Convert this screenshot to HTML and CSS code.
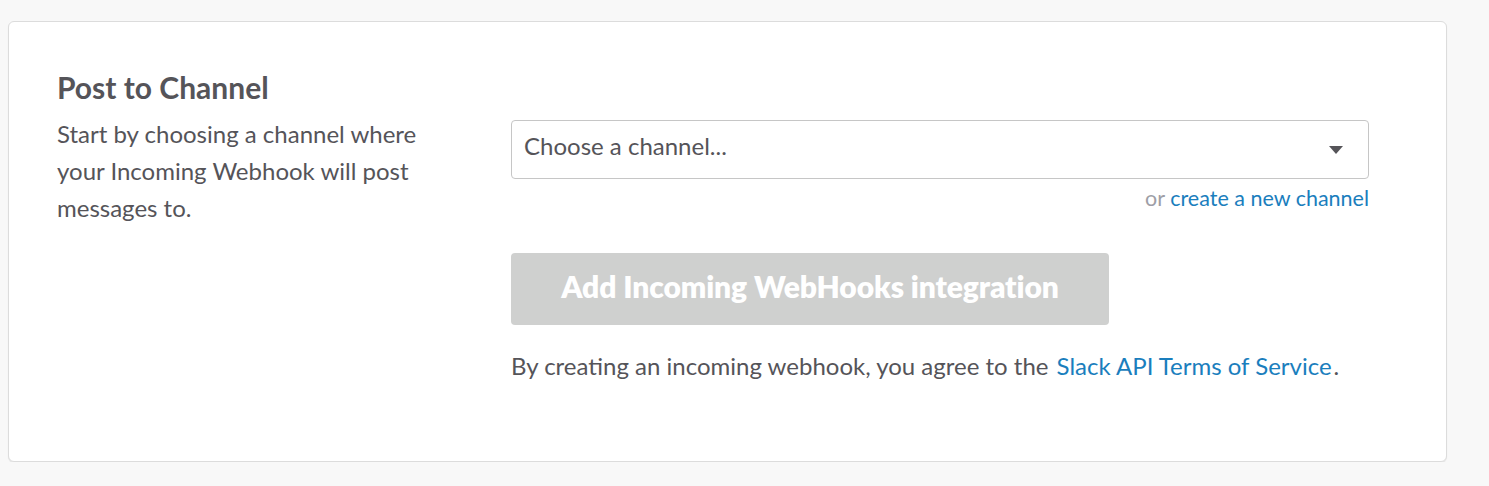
FILE: index.html
```html
<!DOCTYPE html>
<html>
<head>
<meta charset="utf-8">
<link rel="stylesheet" href="styles.css">
</head>
<body>
<div class="card">
  <div class="left">
    <h2 class="title">Post to Channel</h2>
    <p class="desc">Start by choosing a channel where your Incoming Webhook will post messages to.</p>
  </div>
  <div class="right">
    <div class="select">
      <span class="placeholder">Choose a channel...</span>
      <span class="caret"></span>
    </div>
    <div class="create">or <a class="link" href="#">create a new channel</a></div>
    <button class="btn">Add Incoming WebHooks integration</button>
    <p class="terms">By creating an incoming webhook, you agree to the <a class="link tos" href="#">Slack API Terms of Service</a><span class="dot">.</span></p>
  </div>
</div>
</body>
</html>
```

FILE: styles.css
```css
html, body {
  margin: 0;
  padding: 0;
  background: #f8f8f8;
}
body {
  padding: 21px 42px 0 8px;
  font-family: Lato, "Noto Sans", sans-serif;
  color: #555459;
}
.card {
  box-sizing: border-box;
  width: 1439px;
  height: 441px;
  background: #fff;
  border: 1px solid #dcdcdc;
  border-radius: 6px;
  box-shadow: 0 1px 1px rgba(0,0,0,0.08);
  display: flex;
  padding: 48px 0 0 48px;
}
.left {
  width: 454px;
  flex: none;
}
.title {
  margin: 0;
  font-size: 30px;
  font-weight: 700;
  line-height: 34px;
  color: #555459;
}
.desc {
  margin: 11px 0 0;
  font-size: 24px;
  line-height: 37px;
  width: 395px;
}
.right {
  width: 858px;
  flex: none;
  padding-top: 50px;
}
.select {
  box-sizing: border-box;
  height: 59px;
  border: 1px solid #c6c6c6;
  border-radius: 4px;
  display: flex;
  align-items: center;
  justify-content: space-between;
  padding: 0 25px 0 12px;
}
.placeholder {
  font-size: 24px;
  color: #555459;
  padding-bottom: 8px;
}
.caret {
  width: 0;
  height: 0;
  border-left: 7px solid transparent;
  border-right: 7px solid transparent;
  border-top: 8px solid #555459;
}
.create {
  text-align: right;
  font-size: 21.5px;
  line-height: 26px;
  margin-top: 6px;
  color: #9e9ea6;
}
.link {
  color: #1a7ebd;
  text-decoration: none;
}
.btn {
  display: block;
  margin-top: 42px;
  width: 598px;
  height: 72px;
  border: none;
  border-radius: 4px;
  background: #cfd0cf;
  color: #fff;
  font-family: Lato, "Noto Sans", sans-serif;
  font-weight: 800;
  font-size: 30px;
  letter-spacing: -0.1px;
  padding: 0 0 7px;
}
.terms {
  margin: 26px 0 0;
  font-size: 24px;
  line-height: 30px;
}
.tos {
  margin-left: 2px;
}
.dot {
  margin-left: 2px;
}
```
